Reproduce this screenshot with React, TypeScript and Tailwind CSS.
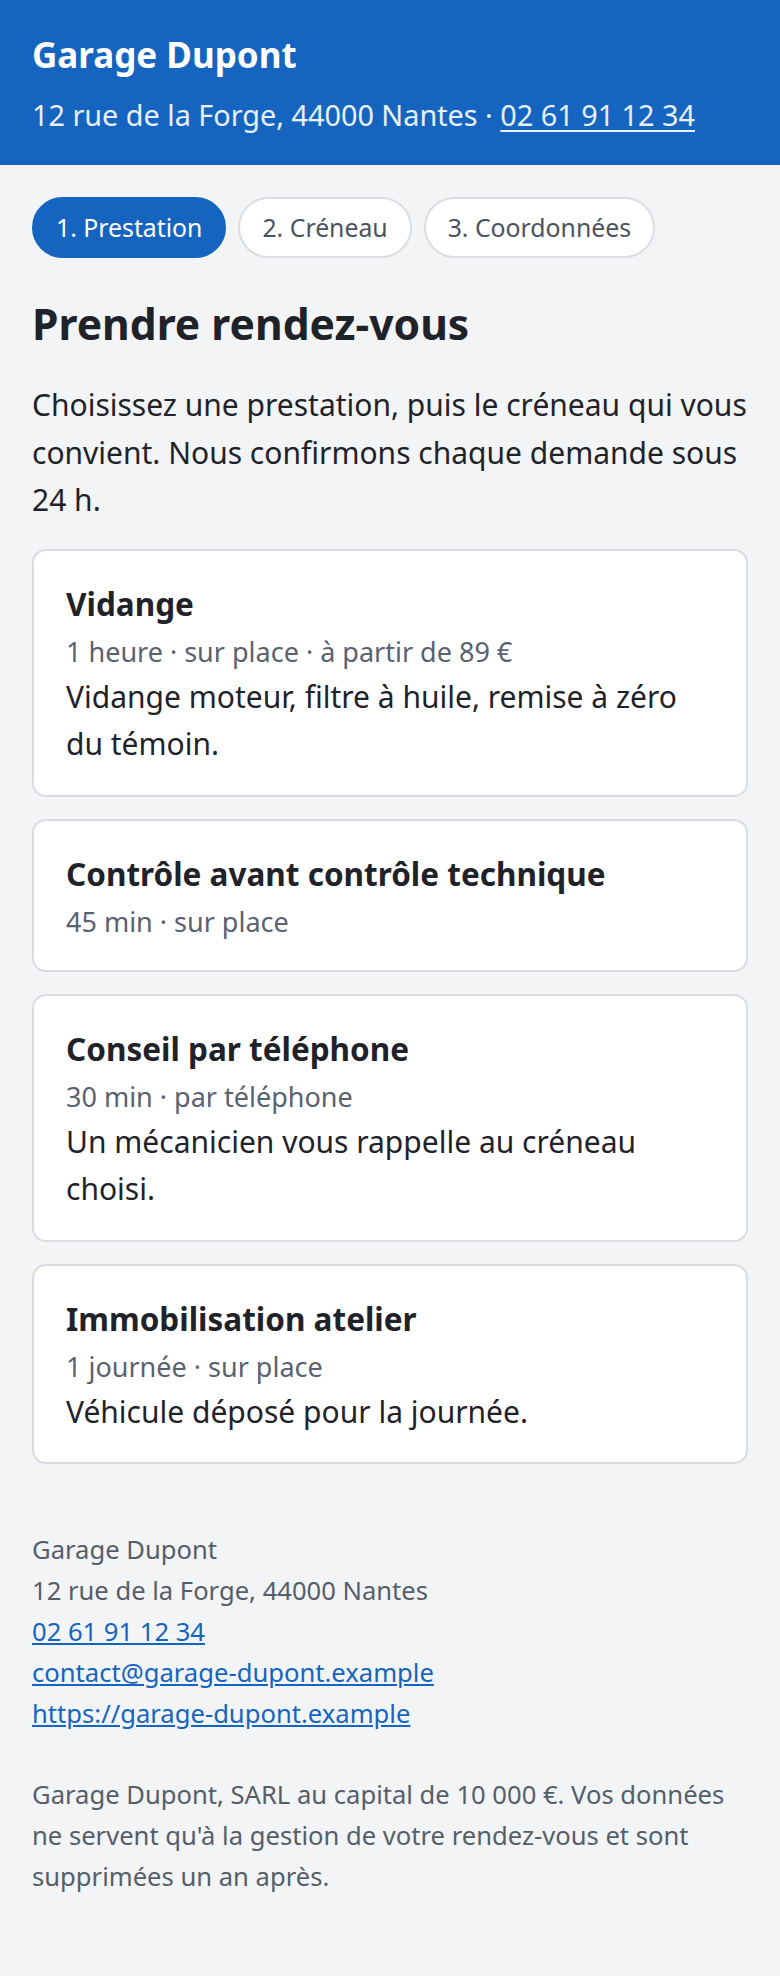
const services = [
  {
    name: "Vidange",
    meta: "1 heure · sur place · à partir de 89 €",
    desc: "Vidange moteur, filtre à huile, remise à zéro du témoin.",
  },
  {
    name: "Contrôle avant contrôle technique",
    meta: "45 min · sur place",
    desc: "",
  },
  {
    name: "Conseil par téléphone",
    meta: "30 min · par téléphone",
    desc: "Un mécanicien vous rappelle au créneau choisi.",
  },
  {
    name: "Immobilisation atelier",
    meta: "1 journée · sur place",
    desc: "Véhicule déposé pour la journée.",
  },
]

const steps = ["1. Prestation", "2. Créneau", "3. Coordonnées"]

export default function App() {
  return (
    <div className="min-h-screen bg-[#f3f4f6] font-['Noto_Sans',sans-serif] text-[#1f2329]">
      <header className="bg-[#1565c0] px-8 pt-[34px] pb-[27px] text-white">
        <h1 className="text-[35px] leading-[1.2] font-bold">Garage Dupont</h1>
        <p className="mt-[17px] text-[28.8px] leading-[1.55] text-white/90">
          12 rue de la Forge, 44000 Nantes ·{" "}
          <a href="#" className="underline underline-offset-4">
            02 61 91 12 34
          </a>
        </p>
      </header>

      <main className="px-8">
        <nav className="flex gap-3 pt-8">
          {steps.map((step, i) => (
            <span
              key={step}
              className={
                i === 0
                  ? "rounded-full border-2 border-[#1565c0] bg-[#1565c0] px-[22px] py-[9px] text-[24.8px] leading-[1.6] text-white"
                  : "rounded-full border-2 border-[#d9dce2] bg-white px-[22px] py-[9px] text-[24.8px] leading-[1.6] text-[#4b5361]"
              }
            >
              {step}
            </span>
          ))}
        </nav>

        <h2 className="mt-10 text-[42.6px] leading-[1.2] font-bold">Prendre rendez-vous</h2>
        <p className="mt-8 text-[30px] leading-[47.5px]">
          Choisissez une prestation, puis le créneau qui vous convient. Nous confirmons
          chaque demande sous 24 h.
        </p>

        <div className="mt-[25px] flex flex-col gap-[22px]">
          {services.map((s) => (
            <div
              key={s.name}
              className="rounded-[14px] border-2 border-[#d9dce2] bg-white px-8 pt-[30px] pb-[27px]"
            >
              <h3 className="text-[31.5px] leading-[45px] font-bold">{s.name}</h3>
              <p className="mt-1 text-[27px] leading-[1.6] text-[#5a6170]">{s.meta}</p>
              {s.desc && <p className="text-[30px] leading-[47.3px]">{s.desc}</p>}
            </div>
          ))}
        </div>
      </main>

      <footer className="px-8 pt-[66px] pb-20 text-[25.6px] leading-[1.6] text-[#555e6b]">
        <div className="flex flex-col">
          <span>Garage Dupont</span>
          <span>12 rue de la Forge, 44000 Nantes</span>
          <a href="#" className="self-start text-[#1565c0] underline">
            02 61 91 12 34
          </a>
          <a href="#" className="self-start text-[#1565c0] underline">
            contact@garage-dupont.example
          </a>
          <a href="#" className="self-start text-[#1565c0] underline">
            https://garage-dupont.example
          </a>
        </div>
        <p className="mt-10">
          Garage Dupont, SARL au capital de 10 000 €. Vos données ne servent qu'à la
          gestion de votre rendez-vous et sont supprimées un an après.
        </p>
      </footer>
    </div>
  )
}
